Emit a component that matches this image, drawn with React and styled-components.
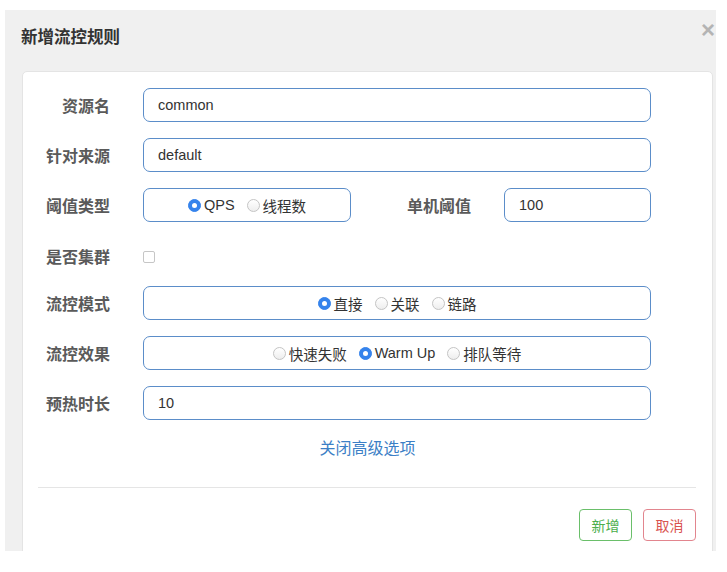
import React from "react";
import styled, { createGlobalStyle } from "styled-components";

const GlobalStyle = createGlobalStyle`
  body {
    margin: 0;
    background: #fff;
    font-family: "Liberation Sans", "Noto Sans CJK SC", sans-serif;
  }
`;

const Page = styled.div`
  padding: 10px 11px 0 5px;
`;

const Modal = styled.div`
  position: relative;
  height: 541px;
  overflow: hidden;
  background-color: #f0f0f0;
  padding: 0 3px 0 17px;
`;

const Header = styled.div`
  height: 52px;
  display: flex;
  align-items: center;
  margin-left: -1px;
`;

const Title = styled.div`
  font-family: "Liberation Sans", "Noto Sans CJK SC", sans-serif;
  font-size: 16.5px;
  font-weight: 700;
  color: #333;
`;

const Close = styled.div`
  position: absolute;
  top: 8px;
  right: 1px;
  font-size: 24px;
  line-height: 24px;
  font-family: "Liberation Sans", sans-serif;
  font-weight: 700;
  color: #b4b4b4;
`;

const Card = styled.div`
  margin-top: 9px;
  background-color: #fff;
  border: 1px solid #e4e4e4;
  border-radius: 5px;
  padding-top: 16px;
  min-height: 520px;
`;

const Form = styled.div`
  display: flex;
  flex-direction: column;
  gap: 16px;
`;

const Row = styled.div`
  display: grid;
  grid-template-columns: 87px 1fr;
  column-gap: 33px;
  align-items: center;
  padding-right: 61px;
  min-height: 34px;
  ${(p) => p.$compact && "min-height: 28px; padding-top: 4px;"}
`;

const Label = styled.label`
  text-align: right;
  font-family: "Noto Sans CJK SC", sans-serif;
  font-size: 16px;
  font-weight: 700;
  color: #5a5a5a;
  white-space: nowrap;
`;

const Split = styled.div`
  display: flex;
  align-items: center;
`;

const SubLabel = styled(Label)`
  width: 120px;
  margin-right: 33px;
  flex: none;
`;

const Input = styled.input`
  box-sizing: border-box;
  width: 100%;
  height: 34px;
  border: 1px solid #5b8dc9;
  border-radius: 7px;
  padding: 0 14px;
  font-family: "Liberation Sans", sans-serif;
  font-size: 14.5px;
  color: #333;
  outline: none;
  background: #fff;
  flex: 1;
`;

const RadioBox = styled.div`
  box-sizing: border-box;
  height: 34px;
  border: 1px solid #5b8dc9;
  border-radius: 7px;
  display: flex;
  align-items: center;
  justify-content: center;
  gap: 12px;
  width: ${(p) => (p.$width ? `${p.$width}px` : "100%")};
  flex: none;
`;

const Option = styled.span`
  display: inline-flex;
  align-items: center;
  gap: 3px;
  font-family: "Liberation Sans", "Noto Sans CJK SC", sans-serif;
  font-size: 14.5px;
  color: #333;
`;

const Dot = styled.span`
  box-sizing: border-box;
  width: 13px;
  height: 13px;
  border-radius: 50%;
  flex: none;
  position: relative;
  border: 1px solid ${(p) => (p.$on ? "#3583ec" : "#c4c4c4")};
  background: ${(p) =>
    p.$on ? "#3583ec" : "linear-gradient(#fff, #eeeeee)"};
  &::after {
    content: "";
    display: ${(p) => (p.$on ? "block" : "none")};
    position: absolute;
    left: 3px;
    top: 3px;
    width: 5px;
    height: 5px;
    border-radius: 50%;
    background: #fff;
  }
`;

const Check = styled.span`
  box-sizing: border-box;
  display: block;
  width: 12px;
  height: 12px;
  border: 1px solid #c6c6c6;
  border-radius: 2px;
  margin-top: 2px;
`;

const Toggle = styled.div`
  margin-top: 17px;
  text-align: center;
  font-family: "Noto Sans CJK SC", sans-serif;
  font-size: 16px;
  line-height: 20px;
  color: #3c7fc6;
`;

const Divider = styled.div`
  margin: 30px 16px 0 15px;
  height: 1px;
  background: #e5e5e5;
`;

const Footer = styled.div`
  display: flex;
  justify-content: flex-end;
  gap: 11px;
  padding: 21px 16px 0 0;
`;

const Button = styled.button`
  width: 53px;
  height: 32px;
  background: #fff;
  border-radius: 4px;
  font-family: "Noto Sans CJK SC", sans-serif;
  font-size: 14px;
  padding: 0;
  border: 1px solid ${(p) => (p.$tone === "danger" ? "#e2858e" : "#6abf6a")};
  color: ${(p) => (p.$tone === "danger" ? "#d9534f" : "#4cae4c")};
`;

const Radios = ({ options, value, width }) => (
  <RadioBox $width={width}>
    {options.map((o) => (
      <Option key={o}>
        <Dot $on={o === value} />
        {o}
      </Option>
    ))}
  </RadioBox>
);

export default function App() {
  return (
    <Page>
      <GlobalStyle />
      <Modal>
        <Header>
          <Title>新增流控规则</Title>
        </Header>
        <Close>×</Close>
        <Card>
          <Form>
            <Row>
              <Label>资源名</Label>
              <Input defaultValue="common" />
            </Row>
            <Row>
              <Label>针对来源</Label>
              <Input defaultValue="default" />
            </Row>
            <Row>
              <Label>阈值类型</Label>
              <Split>
                <Radios options={["QPS", "线程数"]} value="QPS" width={208} />
                <SubLabel>单机阈值</SubLabel>
                <Input defaultValue="100" />
              </Split>
            </Row>
            <Row $compact>
              <Label>是否集群</Label>
              <Check />
            </Row>
            <Row>
              <Label>流控模式</Label>
              <Radios options={["直接", "关联", "链路"]} value="直接" />
            </Row>
            <Row>
              <Label>流控效果</Label>
              <Radios options={["快速失败", "Warm Up", "排队等待"]} value="Warm Up" />
            </Row>
            <Row>
              <Label>预热时长</Label>
              <Input defaultValue="10" />
            </Row>
          </Form>
          <Toggle>关闭高级选项</Toggle>
          <Divider />
          <Footer>
            <Button>新增</Button>
            <Button $tone="danger">取消</Button>
          </Footer>
        </Card>
      </Modal>
    </Page>
  );
}
